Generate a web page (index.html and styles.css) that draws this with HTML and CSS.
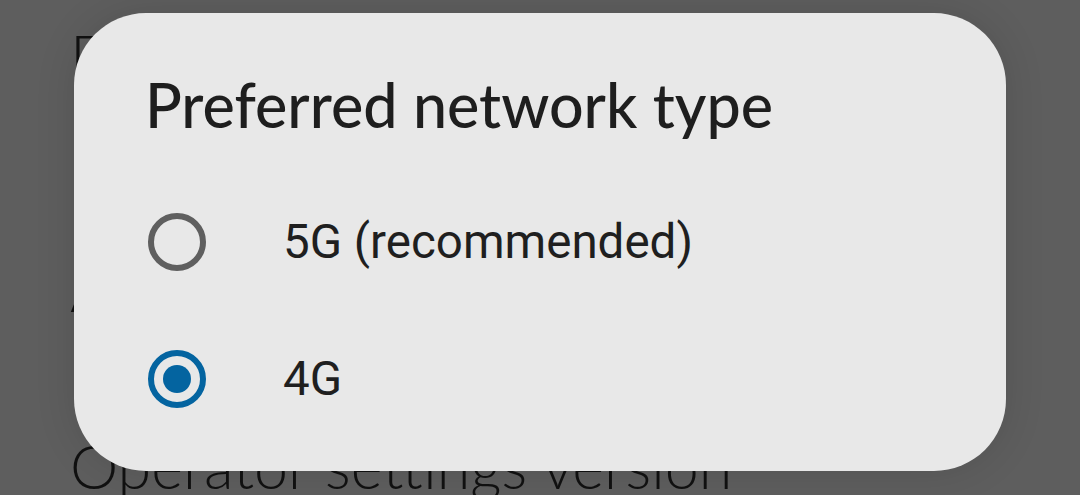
FILE: index.html
```html
<!DOCTYPE html>
<html lang="en">
<head>
    <meta charset="UTF-8">
    <meta name="viewport" content="width=device-width, initial-scale=1.0">
    <title>Preferred network type</title>
    <link rel="stylesheet" href="styles.css">
</head>
<body>

    <div class="settings">
        <div class="setting first">Data warning &amp; limit</div>
        <div class="setting">Access Point Names</div>
        <div class="setting last">Operator settings version</div>
    </div>

    <div class="dialog">
        <h1 class="dialog-title">Preferred network type</h1>

        <div class="options">
            <label class="option">
                <span class="radio"></span>
                <span class="option-text">5G (recommended)</span>
            </label>
            <label class="option">
                <span class="radio checked"></span>
                <span class="option-text">4G</span>
            </label>
        </div>
    </div>

</body>
</html>
```

FILE: styles.css
```css
html, body {
    margin: 0;
    height: 100%;
}
body {
    background: #5e5e5e;
    font-family: Roboto, "Liberation Sans", sans-serif;
    overflow: hidden;
    position: relative;
}
.settings {
    padding: 20px 0 0 70px;
}
.setting {
    font-family: Lato, "Open Sans", sans-serif;
    font-weight: 300;
    font-size: 61px;
    line-height: 72px;
    color: #111;
    height: 177px;
}
.setting.first {
    height: 233px;
}
.setting.last {
    height: auto;
}
.dialog {
    position: absolute;
    left: 74px;
    top: 13px;
    width: 932px;
    height: 458px;
    box-sizing: border-box;
    background: #e8e8e8;
    border-radius: 72px;
    padding: 59px 0 0 71px;
    box-shadow: 0 0 40px rgba(0, 0, 0, 0.12);
}
.dialog-title {
    margin: 0;
    font-family: Lato, "Open Sans", sans-serif;
    font-weight: 500;
    font-size: 61px;
    line-height: 66px;
    color: #1e1e1e;
}
.options {
    display: flex;
    flex-direction: column;
    margin-top: 35px;
}
.option {
    display: flex;
    align-items: center;
    height: 137px;
}
.radio {
    box-sizing: border-box;
    width: 58px;
    height: 58px;
    margin: 0 77px 0 3px;
    border: 6px solid #5f5f5f;
    border-radius: 50%;
    display: flex;
    align-items: center;
    justify-content: center;
}
.radio.checked {
    border-color: #0464a0;
}
.radio.checked::after {
    content: "";
    width: 28px;
    height: 28px;
    border-radius: 50%;
    background: #0464a0;
}
.option-text {
    font-size: 47.5px;
    color: #1f1f1f;
}
```
